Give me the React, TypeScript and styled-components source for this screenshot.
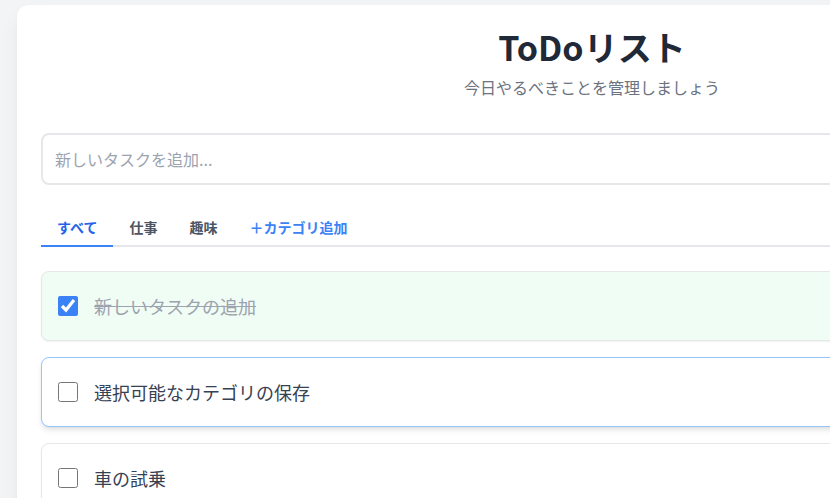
import React from "react";
import styled, { createGlobalStyle } from "styled-components";

const Global = createGlobalStyle`
  html, body { margin: 0; padding: 0; }
  body {
    background: #f3f4f6;
    overflow: hidden;
    font-family: "Noto Sans CJK JP", "Noto Sans", sans-serif;
  }
`;

const Page = styled.div`
  padding: 5px 0 0 17px;
  width: 1200px;
`;

const Card = styled.div`
  width: 1150px;
  box-sizing: border-box;
  background: #ffffff;
  border-radius: 12px;
  padding: 24px;
  box-shadow: 0 10px 25px -5px rgba(0, 0, 0, 0.08), 0 4px 10px -4px rgba(0, 0, 0, 0.06);
`;

const Header = styled.header`
  text-align: center;
  margin-bottom: 34px;
`;

const Title = styled.h1`
  margin: 0 0 10px;
  font-size: 34px;
  line-height: 36px;
  font-weight: 700;
  color: #1f2937;
`;

const Subtitle = styled.p`
  margin: 0;
  font-size: 16px;
  line-height: 24px;
  color: #6b7280;
`;

const TaskInput = styled.input`
  display: block;
  width: 100%;
  box-sizing: border-box;
  padding: 12px 12px;
  font-size: 16px;
  line-height: 24px;
  font-family: inherit;
  border: 2px solid #e5e7eb;
  border-radius: 8px;
  outline: none;
  color: #374151;
  &::placeholder { color: #9ca3af; }
`;

const TabBar = styled.nav`
  display: flex;
  margin-top: 24px;
  border-bottom: 2px solid #e5e7eb;
`;

const Tab = styled.button<{ $active?: boolean; $accent?: boolean }>`
  background: none;
  border: none;
  border-bottom: 2px solid ${(p) => (p.$active ? "#3b82f6" : "transparent")};
  margin-bottom: -2px;
  padding: 8px 16px;
  font-family: inherit;
  font-size: 14px;
  line-height: 20px;
  font-weight: 600;
  color: ${(p) => (p.$active ? "#2563eb" : p.$accent ? "#3b82f6" : "#4b5563")};
  cursor: pointer;
`;

const List = styled.ul`
  list-style: none;
  margin: 24px 0 0;
  padding: 0;
  display: flex;
  flex-direction: column;
  gap: 16px;
`;

const Item = styled.li<{ $done?: boolean; $hover?: boolean }>`
  display: flex;
  align-items: center;
  gap: 16px;
  padding: 20px 16px;
  border-radius: 8px;
  border: 1px solid ${(p) => (p.$hover ? "#93c5fd" : "#e5e7eb")};
  background: ${(p) => (p.$done ? "#f0fdf4" : "#ffffff")};
  box-shadow: ${(p) =>
    p.$hover
      ? "0 4px 6px -1px rgba(0,0,0,0.1), 0 2px 4px -2px rgba(0,0,0,0.08)"
      : "0 1px 2px rgba(0,0,0,0.06)"};
`;

const Check = styled.input`
  width: 20px;
  height: 20px;
  margin: 0;
  accent-color: #3b82f6;
  flex-shrink: 0;
`;

const ItemText = styled.span<{ $done?: boolean }>`
  font-size: 18px;
  line-height: 28px;
  color: ${(p) => (p.$done ? "#9ca3af" : "#374151")};
  text-decoration: ${(p) => (p.$done ? "line-through" : "none")};
`;

const tasks = [
  { text: "新しいタスクの追加", done: true, hover: false },
  { text: "選択可能なカテゴリの保存", done: false, hover: true },
  { text: "車の試乗", done: false, hover: false },
];

export default function App() {
  return (
    <>
      <Global />
      <Page>
        <Card>
          <Header>
            <Title>ToDoリスト</Title>
            <Subtitle>今日やるべきことを管理しましょう</Subtitle>
          </Header>
          <TaskInput placeholder="新しいタスクを追加..." />
          <TabBar>
            <Tab $active>すべて</Tab>
            <Tab>仕事</Tab>
            <Tab>趣味</Tab>
            <Tab $accent>＋カテゴリ追加</Tab>
          </TabBar>
          <List>
            {tasks.map((t) => (
              <Item key={t.text} $done={t.done} $hover={t.hover}>
                <Check type="checkbox" defaultChecked={t.done} />
                <ItemText $done={t.done}>{t.text}</ItemText>
              </Item>
            ))}
          </List>
        </Card>
      </Page>
    </>
  );
}
